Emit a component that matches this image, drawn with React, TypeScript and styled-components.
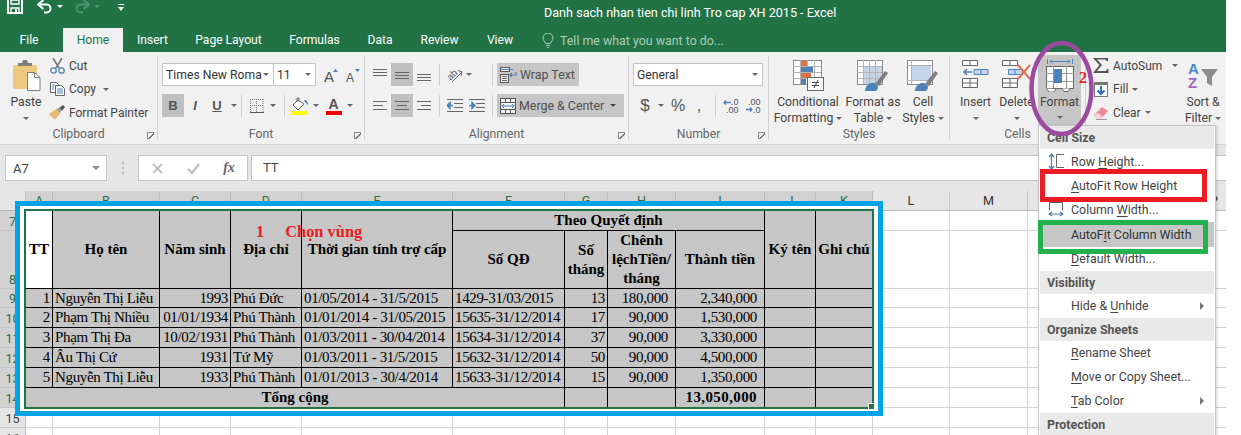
import React from "react";
import styled, { createGlobalStyle } from "styled-components";

const UI = `Roboto, "Open Sans", sans-serif`;
const SERIF = `"Liberation Serif", "Times New Roman", serif`;

const Global = createGlobalStyle`
  html, body { margin: 0; padding: 0; height: 435px; overflow: hidden; background: #fff; }
  svg { display: block; flex: none; }
  * { box-sizing: border-box; }
`;

const Window = styled.div`
  position: relative;
  width: 1226px;
  height: 435px;
  overflow: hidden;
  font-family: ${UI};
  font-size: 12px;
  color: #444;
`;
const Page = styled.div`
  position: relative;
  width: 1241px;
  height: 435px;
  overflow: hidden;
`;
const Spacer = styled.span<{ $w: number }>`
  display: block;
  flex: none;
  width: ${(p) => p.$w}px;
`;

/* ---------- title bar & tabs ---------- */
const TitleBar = styled.div`
  display: flex;
  align-items: flex-start;
  height: 28px;
  background: #217346;
  color: #fff;
`;
const Qat = styled.div`
  display: flex;
  align-items: flex-start;
  width: 544px;
  padding-left: 7px;
`;
const Title = styled.div`
  font-size: 12.6px;
  line-height: 26px;
  white-space: nowrap;
`;
const TabBar = styled.div`
  display: flex;
  align-items: stretch;
  height: 24px;
  padding-left: 5px;
  background: #217346;
`;
const Tab = styled.div<{ $active?: boolean; $w?: number }>`
  display: flex;
  align-items: center;
  justify-content: center;
  width: ${(p) => p.$w}px;
  font-size: 12.1px;
  color: ${(p) => (p.$active ? "#217346" : "#fff")};
  background: ${(p) => (p.$active ? "#f1f1f1" : "transparent")};
`;
const TellMe = styled.div`
  display: flex;
  align-items: center;
  gap: 6px;
  margin-left: 15px;
  font-size: 12.4px;
  color: #a9cdb8;
`;

/* ---------- ribbon ---------- */
const Ribbon = styled.div`
  display: flex;
  height: 93px;
  padding-top: 4px;
  background: #f1f1f1;
  border-bottom: 1px solid #d4d4d4;
`;
const Group = styled.section<{ $w: number; $last?: boolean }>`
  position: relative;
  display: flex;
  flex-direction: column;
  width: ${(p) => p.$w}px;
  height: 84px;
  border-right: ${(p) => (p.$last ? "none" : "1px solid #d0d0d0")};
`;
const GroupBody = styled.div<{ $pl?: number }>`
  display: flex;
  height: 74px;
  padding-left: ${(p) => p.$pl ?? 0}px;
`;
const GroupLabel = styled.div`
  height: 12px;
  line-height: 12px;
  text-align: center;
  color: #666;
  font-size: 12.2px;
`;
const Launcher = styled.span`
  position: absolute;
  right: 3px;
  bottom: 1px;
  width: 7px;
  height: 7px;
  border-left: 1px solid #888;
  border-top: 1px solid #888;
  background: linear-gradient(135deg, transparent 48%, #777 50%, #777 60%, transparent 62%);
`;
const Caret = styled.span<{ $mx?: number; $big?: boolean; $dark?: boolean; $push?: boolean }>`
  display: inline-block;
  flex: none;
  width: 0;
  height: 0;
  margin: 0 ${(p) => p.$mx ?? 0}px;
  margin-left: ${(p) => (p.$push ? "auto" : `${p.$mx ?? 0}px`)};
  border-left: ${(p) => (p.$big ? 4 : 3)}px solid transparent;
  border-right: ${(p) => (p.$big ? 4 : 3)}px solid transparent;
  border-top: ${(p) => (p.$big ? 4 : 3)}px solid ${(p) => (p.$big ? "#888" : p.$dark ? "#444" : "#666")};
`;
const Large = styled.div<{ $w: number; $active?: boolean; $ml?: number; $mt?: number }>`
  display: flex;
  flex-direction: column;
  align-items: center;
  flex: none;
  width: ${(p) => p.$w}px;
  height: 70px;
  margin-left: ${(p) => p.$ml ?? 0}px;
  margin-top: ${(p) => p.$mt ?? 0}px;
  padding-top: 4px;
  background: ${(p) => (p.$active ? "#c6c6c6" : "transparent")};
  white-space: nowrap;
`;
const LargeIcon = styled.div`
  display: flex;
  justify-content: center;
  height: 32px;
`;
const LargeLine = styled.div<{ $mt?: number }>`
  display: flex;
  align-items: center;
  gap: 3px;
  height: 16px;
  margin-top: ${(p) => p.$mt ?? 0}px;
  line-height: 16px;
  font-size: 12.2px;
`;
const Stack = styled.div<{ $w?: number; $pl?: number }>`
  display: flex;
  flex-direction: column;
  flex: none;
  width: ${(p) => (p.$w ? `${p.$w}px` : "auto")};
  margin-top: -2px;
  padding-left: ${(p) => p.$pl ?? 0}px;
`;
const Small = styled.div`
  display: flex;
  align-items: center;
  gap: 4px;
  height: 23.5px;
  white-space: nowrap;
  font-size: 12px;
`;
const IconSlot = styled.div<{ $w?: number }>`
  display: flex;
  align-items: center;
  justify-content: center;
  flex: none;
  width: ${(p) => p.$w ?? 16}px;
`;
const Rows = styled.div<{ $pl: number }>`
  display: flex;
  flex-direction: column;
  gap: 8px;
  padding: 7px 0 0 ${(p) => p.$pl}px;
`;
const Row = styled.div`
  display: flex;
  align-items: center;
  height: 23px;
`;
const Combo = styled.div<{ $w: number; $ml?: number }>`
  display: flex;
  align-items: center;
  justify-content: space-between;
  flex: none;
  width: ${(p) => p.$w}px;
  height: 23px;
  margin-left: ${(p) => p.$ml ?? 0}px;
  padding: 0 4px 0 3px;
  background: #fff;
  border: 1px solid #c6c6c6;
  font-size: 12.2px;
  white-space: nowrap;
`;
const ComboText = styled.span`
  color: #333;
`;
const Tool = styled.div<{ $w: number; $active?: boolean; $ml?: number }>`
  display: flex;
  align-items: center;
  justify-content: center;
  flex: none;
  width: ${(p) => p.$w}px;
  height: 23px;
  margin-left: ${(p) => p.$ml ?? 0}px;
  background: ${(p) => (p.$active ? "#c0c0c0" : "transparent")};
`;
const ToolLetter = styled.span<{ $b?: boolean; $i?: boolean; $u?: boolean }>`
  font-family: "Liberation Sans", sans-serif;
  font-size: 13px;
  font-weight: ${(p) => (p.$b ? 700 : 400)};
  font-style: ${(p) => (p.$i ? "italic" : "normal")};
  text-decoration: ${(p) => (p.$u ? "underline" : "none")};
  color: #555;
`;
const VLine = styled.div<{ $l?: number; $r?: number }>`
  flex: none;
  width: 1px;
  height: 22px;
  margin-left: ${(p) => p.$l ?? 0}px;
  margin-right: ${(p) => p.$r ?? 0}px;
  background: #cfcfcf;
`;
const WideTool = styled.div<{ $w: number }>`
  display: flex;
  align-items: center;
  gap: 3px;
  flex: none;
  width: ${(p) => p.$w}px;
  height: 23px;
  padding: 0 3px;
  background: #c6c6c6;
  font-size: 12.4px;
  color: #505050;
  white-space: nowrap;
`;
const NumSign = styled.span<{ $size: number }>`
  font-family: "Liberation Sans", sans-serif;
  font-size: ${(p) => p.$size}px;
  color: #555;
`;

/* ---------- formula bar ---------- */
const FormulaBar = styled.div`
  display: flex;
  align-items: flex-start;
  height: 46px;
  padding-top: 10px;
  background: #e6e6e6;
`;
const NameBox = styled.div`
  display: flex;
  align-items: center;
  justify-content: space-between;
  width: 102px;
  height: 26px;
  margin-left: 5px;
  padding: 0 6px 0 7px;
  background: #fff;
  border: 1px solid #c6c6c6;
  font-size: 13px;
`;
const Dots = styled.div`
  display: flex;
  flex-direction: column;
  gap: 3px;
  width: 2px;
  margin: 7px 14px 0 15px;
  & > i {
    display: block;
    width: 2px;
    height: 2px;
    background: #b4b4b4;
  }
`;
const FxButtons = styled.div`
  display: flex;
  align-items: center;
  width: 110px;
  height: 26px;
  background: #fff;
  border: 1px solid #c6c6c6;
`;
const FxSlot = styled.div<{ $w: number }>`
  display: flex;
  justify-content: center;
  width: ${(p) => p.$w}px;
`;
const FxLabel = styled.span`
  font-family: ${SERIF};
  font-style: italic;
  font-weight: 700;
  font-size: 14px;
  color: #666;
`;
const FormulaInput = styled.div`
  flex: 1;
  height: 26px;
  margin-left: 3px;
  padding-left: 11px;
  line-height: 24px;
  background: #fff;
  border: 1px solid #c6c6c6;
  border-right: none;
  font-size: 13px;
`;

/* ---------- sheet ---------- */
const Sheet = styled.div`
  position: relative;
  height: 244px;
  overflow: hidden;
`;
const Grid = styled.table`
  table-layout: fixed;
  width: 1244px;
  border-collapse: separate;
  border-spacing: 0;
`;
const Col = styled.col<{ $w: number }>`
  width: ${(p) => p.$w}px;
`;
const Hd = styled.th<{ $sel?: boolean }>`
  padding: 0;
  height: 20px;
  font-weight: 400;
  font-size: 12.6px;
  text-align: center;
  vertical-align: middle;
  color: ${(p) => (p.$sel ? "#2a6e47" : "#333")};
  background: ${(p) => (p.$sel ? "#d2d2d2" : "#e6e6e6")};
  border-right: 1px solid ${(p) => (p.$sel ? "#bdbdbd" : "#c6c6c6")};
  border-bottom: 1px solid #b8b8b8;
`;
const Corner = styled(Hd)`
  background: #e6e6e6;
`;
const RowHd = styled.th<{ $sel?: boolean; $h: number }>`
  padding: 0;
  height: ${(p) => p.$h}px;
  font-weight: 400;
  font-size: 12.6px;
  line-height: 16px;
  text-align: center;
  vertical-align: bottom;
  overflow: hidden;
  color: ${(p) => (p.$sel ? "#2a6e47" : "#444")};
  background: ${(p) => (p.$sel ? "#d2d2d2" : "#e6e6e6")};
  border-right: 1px solid #bdbdbd;
  border-bottom: 1px solid #c6c6c6;
`;
const Blank = styled.td`
  padding: 0;
  border-right: 1px solid #d4d4d4;
  border-bottom: 1px solid #d4d4d4;
`;
const Cell = styled.td<{ $align?: string; $pr?: number; $b?: boolean; $white?: boolean; $lh?: number; $ls?: number }>`
  padding: 0 ${(p) => p.$pr ?? 2}px 0 2px;
  font-family: ${SERIF};
  font-size: 15px;
  letter-spacing: ${(p) => p.$ls ?? (p.$b ? 0 : -0.35)}px;
  line-height: ${(p) => p.$lh ?? 17}px;
  font-weight: ${(p) => (p.$b ? 700 : 400)};
  text-align: ${(p) => p.$align ?? "left"};
  color: #000;
  white-space: nowrap;
  overflow: hidden;
  background: ${(p) => (p.$white ? "#fff" : "#c6c6c6")};
  border-right: 1px solid #000;
  border-bottom: 1px solid #000;
`;
const WrapLine = styled.div`
  white-space: nowrap;
`;

/* ---------- annotations ---------- */
const BlueFrame = styled.div`
  position: absolute;
  left: 15px;
  top: 10px;
  width: 868px;
  height: 215px;
  border: 5px solid #00a2e8;
`;
const WhiteGap = styled.div`
  height: 100%;
  border-style: solid;
  border-color: #fff;
  border-width: 3px 4px 2px 4px;
`;
const GreenFrame = styled.div`
  position: relative;
  height: 100%;
  border: 2px solid #217346;
`;
const Handle = styled.span`
  position: absolute;
  right: -3px;
  bottom: -3px;
  width: 7px;
  height: 7px;
  background: #217346;
  border: 1px solid #fff;
`;
const Note = styled.div`
  position: absolute;
  display: flex;
  gap: 21px;
  left: 256px;
  top: 32px;
  font-family: ${SERIF};
  font-weight: 700;
  font-size: 16.4px;
  line-height: 18px;
  color: #ed1c24;
  white-space: nowrap;
`;
const Two = styled.span`
  position: absolute;
  left: 1079px;
  top: 69px;
  font-family: ${SERIF};
  font-weight: 700;
  font-size: 16px;
  line-height: 18px;
  color: #ed1c24;
`;
const Ring = styled.svg`
  position: absolute;
  left: 1028px;
  top: 40px;
`;

/* ---------- menu ---------- */
const Menu = styled.div`
  position: absolute;
  left: 1038px;
  top: 125px;
  width: 178px;
  height: 320px;
  padding: 0 1px;
  background: #fff;
  border: 1px solid #c6c6c6;
  box-shadow: 1px 1px 3px rgba(0, 0, 0, 0.18);
  font-size: 12.4px;
`;
const MenuHead = styled.div`
  height: 23px;
  padding-left: 7px;
  line-height: 23px;
  background: #e9e9e9;
  font-weight: 700;
  color: #555;
`;
const MenuItem = styled.div<{ $h?: number; $hover?: boolean }>`
  display: flex;
  align-items: center;
  height: ${(p) => p.$h ?? 24}px;
  background: ${(p) => (p.$hover ? "#c6c6c6" : "transparent")};
  color: ${(p) => (p.$hover ? "#333" : "#444")};
  white-space: nowrap;
  & u {
    text-underline-offset: 2px;
  }
`;
const MenuIcon = styled.div`
  display: flex;
  justify-content: center;
  flex: none;
  width: 31px;
`;
const SubArrow = styled.span`
  margin-left: auto;
  margin-right: 10px;
  width: 0;
  height: 0;
  border-top: 4px solid transparent;
  border-bottom: 4px solid transparent;
  border-left: 4px solid #777;
`;
const Mark = styled.div<{ $c: string; $l: number; $t: number; $w: number; $h: number }>`
  position: absolute;
  left: ${(p) => p.$l}px;
  top: ${(p) => p.$t}px;
  width: ${(p) => p.$w}px;
  height: ${(p) => p.$h}px;
  border: 5px solid ${(p) => p.$c};
`;

/* ---------- icons ---------- */
const B = "#4d82b8";
const O = "#e0714b";

const Save = () => (
  <svg width="16" height="14" viewBox="0 0 16 14">
    <path d="M1 0v13h14V0" fill="none" stroke="#fff" strokeWidth="2" />
    <path d="M4 0h8v4H4zM4 8h8v5H4z" fill="none" stroke="#fff" strokeWidth="1.4" />
    <rect x="8" y="9" width="2" height="3" fill="#fff" />
  </svg>
);
const UndoSvg = styled.svg<{ $flip?: boolean }>`
  transform: ${(p) => (p.$flip ? "scaleX(-1)" : "none")};
`;
const Undo = ({ dim }: { dim?: boolean }) => (
  <UndoSvg $flip={dim} width="16" height="14" viewBox="0 0 16 14">
    <path d="M2 4.500h7.500a4 4 0 0 1 0 8H7" fill="none" stroke={dim ? "#4f9470" : "#fff"} strokeWidth="2" />
    <path d="M6.500 0 1 4.500 6.500 9" fill="none" stroke={dim ? "#4f9470" : "#fff"} strokeWidth="2" />
  </UndoSvg>
);
const WhiteCaret = styled(Caret)<{ $dim?: boolean; $ml: number }>`
  margin: 5px 0 0 ${(p) => p.$ml}px;
  border-top-color: ${(p) => (p.$dim ? "#4f9470" : "#fff")};
`;
const QatCustom = styled.svg`
  margin: 4px 0 0 18px;
`;
const Bulb = () => (
  <svg width="12" height="15" viewBox="0 0 12 15">
    <path d="M3.500 10.500C3 8 1 7.500 1 5a5 5 0 0 1 10 0c0 2.500-2 3-2.500 5.500z" fill="none" stroke="#a9cdb8" />
    <path d="M4 12.500h4M5 14.500h2" stroke="#a9cdb8" />
  </svg>
);
const Paste = () => (
  <svg width="30" height="31" viewBox="0 0 30 31">
    <rect x="2" y="5" width="24" height="24" rx="2" fill="#edc87e" />
    <path d="M7 6V3h4l1-3h4l1 3h4v3z" fill="#7d7d7d" />
    <path d="M16.500 12.500h7l5.500 5v13H16.500z" fill="#fff" stroke="#7d7d7d" />
    <path d="M23.500 12.500v5h5.500" fill="none" stroke="#7d7d7d" />
  </svg>
);
const Cut = () => (
  <svg width="15" height="16" viewBox="0 0 15 16">
    <path d="M3 0l6 10M12 0 6 10" stroke="#777" strokeWidth="1.6" />
    <circle cx="3.500" cy="12.500" r="2.700" fill="none" stroke={B} strokeWidth="1.300" />
    <circle cx="11.500" cy="12.500" r="2.700" fill="none" stroke={B} strokeWidth="1.300" />
  </svg>
);
const Copy = () => (
  <svg width="15" height="14" viewBox="0 0 15 14">
    <path d="M.5.500h6l2 2v8H.5z" fill="#fff" stroke="#666" />
    <path d="M5.500 3.500h6l3 3v7h-9z" fill="#fff" stroke="#666" />
    <path d="M7 7h6M7 9h6M7 11h6M2 3h3M2 5h2M2 7h2" stroke={B} />
  </svg>
);
const Painter = () => (
  <svg width="16" height="15" viewBox="0 0 16 15">
    <path d="M0 9 7 4l4 5-5 5.500C4 13 1 11 0 9z" fill="#e8bb70" />
    <path d="M7 4l3-1 2 3-1 2.500z" fill="#999" />
    <path d="M10 3l4-3 2 2-3 4z" fill="#555" />
  </svg>
);
const Grow = ({ up, size }: { up: boolean; size: number }) => (
  <svg width="17" height="20" viewBox="0 0 17 20">
    <text x="1" y="17" fontFamily="Liberation Sans" fontSize={size} fill="#555">A</text>
    <path d={up ? "M10 7l2.500-3L15 7z" : "M10 4h5l-2.500 3z"} fill={B} />
  </svg>
);
const Borders = () => (
  <svg width="14" height="14" viewBox="0 0 14 14">
    <path d="M.5 0v13M6.500 0v13M13 0v13M0 .5h13M0 6.500h13" stroke="#777" strokeDasharray="1 1" fill="none" />
    <path d="M0 13.500h14" stroke="#555" />
  </svg>
);
const Fill = () => (
  <svg width="17" height="18" viewBox="0 0 17 18">
    <path d="M6 3 1 8l5 5 6-6z" fill="#fff" stroke="#666" />
    <path d="M5 5V1h2v3" fill="none" stroke="#666" />
    <path d="M12 3c3 0 4 2 4 5-1 0-1-2-3-3z" fill={B} />
    <rect x="0" y="14" width="16" height="4" fill="#ffff00" />
  </svg>
);
const FontColor = () => (
  <svg width="16" height="20" viewBox="0 0 16 20">
    <text x="2.500" y="13" fontFamily="Liberation Sans" fontWeight="700" fontSize="14" fill="#555">A</text>
    <rect x="0" y="15" width="16" height="4" fill="#f00000" />
  </svg>
);
const Lines = ({ ys, xs }: { ys: number[]; xs: [number, number][] }) => (
  <svg width="14" height="14" viewBox="0 0 14 14">
    {ys.map((y, i) => (
      <path key={y} d={`M${xs[i][0]} ${y + 0.5}H${xs[i][1]}`} stroke="#666" />
    ))}
  </svg>
);
const full: [number, number][] = [[0, 14], [0, 14], [0, 14]];
const Orient = () => (
  <svg width="20" height="20" viewBox="0 0 20 20">
    <text x="3" y="13" transform="rotate(-45 8 10)" fontFamily="Liberation Sans" fontSize="9.500" fill="#555">ab</text>
    <path d="M8 17 18 7M14 5.500 18 7l-1 4" fill="none" stroke="#666" />
  </svg>
);
const Indent = ({ right }: { right?: boolean }) => (
  <svg width="16" height="13" viewBox="0 0 16 13">
    <path d="M0 .5h16M7 4.500h9M7 8.500h9M0 12.500h16" stroke="#666" />
    <path d={right ? "M0 6.500h4M3 3.500l3 3-3 3z" : "M6 6.500H2M3 3.500l-3 3 3 3z"} stroke={B} strokeWidth="1.500" fill={B} />
  </svg>
);
const Wrap = () => (
  <svg width="17" height="16" viewBox="0 0 17 16">
    <rect x=".5" y=".5" width="9" height="4" fill="#f1f1f1" stroke="#555" />
    <path d="M1 2.500h12" stroke={B} />
    <rect x=".5" y="7.500" width="8" height="8" fill="#f1f1f1" stroke="#555" />
    <path d="M2 9.500h5M2 11.500h5M2 13.500h5" stroke="#666" />
    <path d="M16 5v3h-6M12 6l-2 2 2 2" fill="none" stroke={B} strokeWidth="1.200" />
  </svg>
);
const Merge = () => (
  <svg width="16" height="16" viewBox="0 0 16 16">
    <rect x=".5" y=".5" width="15" height="15" fill="#f1f1f1" stroke="#555" />
    <path d="M0 4.500h16M0 11.500h16M5.500 0v4M10.500 0v4M5.500 12v4M10.500 12v4" stroke="#555" />
    <path d="M2 8h12M4 6 2 8l2 2M12 6l2 2-2 2" fill="none" stroke={B} />
  </svg>
);
const Dec = ({ flip }: { flip?: boolean }) => (
  <svg width="16" height="16" viewBox="0 0 16 16">
    {flip ? (
      <>
        <text x="3" y="7" fontFamily="Liberation Sans" fontSize="9" fill="#555">.00</text>
        <text x="8" y="15" fontFamily="Liberation Sans" fontSize="9" fill="#555">.0</text>
        <path d="M1 11.500h6M5 9.500l2 2-2 2" fill="none" stroke={B} strokeWidth="1.300" />
      </>
    ) : (
      <>
        <text x="8" y="7" fontFamily="Liberation Sans" fontSize="9" fill="#555">.0</text>
        <text x="3" y="15" fontFamily="Liberation Sans" fontSize="9" fill="#555">.00</text>
        <path d="M8 4.500H1M3 2.500l-2 2 2 2" fill="none" stroke={B} strokeWidth="1.300" />
      </>
    )}
  </svg>
);
const TableGrid = ({ w, h, cols, rows }: { w: number; h: number; cols: number[]; rows: number[] }) => (
  <>
    <rect x=".5" y=".5" width={w} height={h} fill="#fff" stroke="#8a8a8a" />
    {cols.map((x) => (
      <path key={`c${x}`} d={`M${x + 0.5} 0v${h}`} stroke="#b4b4b4" />
    ))}
    {rows.map((y) => (
      <path key={`r${y}`} d={`M0 ${y + 0.5}h${w}`} stroke="#b4b4b4" />
    ))}
  </>
);
const CondFmt = () => (
  <svg width="31" height="31" viewBox="0 0 31 31">
    <TableGrid w={28} h={24} cols={[7, 14, 21]} rows={[6, 12, 18]} />
    <rect x="8" y="1" width="6" height="5" fill={O} />
    <rect x="8" y="7" width="12" height="5" fill={B} />
    <rect x="8" y="13" width="10" height="5" fill={O} />
    <rect x="8" y="19" width="5" height="5" fill={B} />
    <rect x="14.500" y="17.500" width="16" height="13" fill="#fff" stroke="#666" />
    <path d="M19 22.500h7M19 25.500h7M25 20l-4 8" stroke="#444" fill="none" />
  </svg>
);
const Brush = () => (
  <>
    <path d="M18 24 28 11l3 2-9 13z" fill="#7f7f7f" />
    <path d="M8 31c0-5 5-9 9-8l4 3c0 3-1 5-3 5z" fill={B} />
  </>
);
const FmtTable = () => (
  <svg width="32" height="31" viewBox="0 0 32 31">
    <TableGrid w={25} h={24} cols={[6, 12, 18]} rows={[6, 12, 18]} />
    <rect x="7" y="7" width="18" height="17" fill="#c5d5e6" />
    <path d="M7 12.500h18M7 18.500h18M12.500 7v17M18.500 7v17" stroke="#b4b4b4" />
    <Brush />
  </svg>
);
const CellStyle = () => (
  <svg width="32" height="31" viewBox="0 0 32 31">
    <TableGrid w={25} h={24} cols={[4]} rows={[5, 20]} />
    <rect x="5" y="6" width="19" height="14" fill="#c2d5ea" />
    <Brush />
  </svg>
);
const InsertIco = () => (
  <svg width="27" height="28" viewBox="0 0 27 28">
    <path d="M.5.500h15v5H.5zM8 0v5M.5 18.500h15v9H.5zM8 18v9M0 23h15" fill="#fff" stroke="#666" />
    <path d="M12 9.500h14v5H12zM19 9v5" fill="#c2d5ea" stroke={B} />
    <path d="M10 12H2M5 9l-3 3 3 3" fill="none" stroke={B} strokeWidth="1.500" />
  </svg>
);
const DeleteIco = () => (
  <svg width="30" height="28" viewBox="0 0 30 28">
    <path d="M.5.500h15v5H.5zM8 0v5M.5 18.500h15v9H.5zM8 18v9M0 23h15" fill="#fff" stroke="#666" />
    <path d="M6.500 9.500h14v5h-14zM13 9v5" fill="#c2d5ea" stroke={B} />
    <path d="M16 5l12 14M28 5 16 19" stroke={O} strokeWidth="2" />
  </svg>
);
const FormatIco = () => (
  <svg width="28" height="33" viewBox="0 0 28 33">
    <path d="M1.500 0v5M26.500 0v5M4 2.500h20M6 .5 4 2.500l2 2M22 .5l2 2-2 2" fill="none" stroke={B} />
    <rect x=".5" y="7.500" width="27" height="22" fill="#fff" stroke="#666" />
    <path d="M7.500 7v22M20.500 7v22M0 14.500h28M0 22.500h28" stroke="#999" />
    <rect x="8" y="10" width="8" height="14" fill={B} />
    <path d="M.5 29.500 3 33h5l2-3M16 29.500l2 3h4l2-3" fill="#fff" stroke="#666" />
  </svg>
);
const Sigma = () => (
  <svg width="16" height="15" viewBox="0 0 16 15">
    <path d="M0 0h15v3h-1.500l-1-1.500H4L9 7l-5 6h9l1-2h1.500v4H0l6.500-8z" fill="#555" />
  </svg>
);
const FillIco = () => (
  <svg width="14" height="15" viewBox="0 0 14 15">
    <rect x=".5" y=".5" width="13" height="14" fill="#fff" stroke="#777" />
    <rect x="0" y="0" width="14" height="3" fill="#777" />
    <path d="M7 4v8M3.500 8.500 7 12l3.500-3.500" fill="none" stroke="#2f6fb0" strokeWidth="2" />
  </svg>
);
const Eraser = () => (
  <svg width="15" height="14" viewBox="0 0 15 14">
    <path d="M0 9 8 1l6 4-7 8H3z" fill="#e98a99" />
    <path d="M0 9l3 4h4l2-2-5-4z" fill="#f5d4d9" />
    <path d="M2 13.500h11" stroke="#999" />
  </svg>
);
const SortIco = () => (
  <svg width="32" height="31" viewBox="0 0 32 31">
    <text x="1" y="14" fontFamily="Liberation Sans" fontWeight="700" fontSize="15" fill="#4a86c5">A</text>
    <text x="1" y="28" fontFamily="Liberation Sans" fontWeight="700" fontSize="15" fill="#9a6bc0">Z</text>
    <path d="M14 9h17l-6 8v9l-5-3v-6z" fill="#8c8c8c" />
  </svg>
);
const RowHeightIco = () => (
  <svg width="16" height="17" viewBox="0 0 16 17">
    <path d="M3.500 2v13M1 4l2.500-3L6 4M1 13l2.500 3L6 13" fill="none" stroke={B} strokeWidth="1.300" />
    <path d="M16 1.500H8.500v13H16" fill="none" stroke="#666" />
  </svg>
);
const ColWidthIco = () => (
  <svg width="16" height="15" viewBox="0 0 16 15">
    <path d="M1.500 8V.5h13V8" fill="none" stroke="#666" />
    <path d="M2 12h12M4 10l-3 2 3 2M12 10l3 2-3 2" fill="none" stroke={B} strokeWidth="1.200" />
  </svg>
);
const X = () => (
  <svg width="11" height="11" viewBox="0 0 11 11">
    <path d="M1 1l9 9M10 1l-9 9" stroke="#bdbdbd" strokeWidth="1.800" />
  </svg>
);
const Check = () => (
  <svg width="13" height="11" viewBox="0 0 13 11">
    <path d="M1 6l4 4 7-9" fill="none" stroke="#bdbdbd" strokeWidth="2.200" />
  </svg>
);

/* ---------- data ---------- */
const COLS = [26, 27, 107, 71, 71, 151, 112, 43, 68, 89, 51, 57, 77, 78, 78, 78, 61];
const LETTERS = ["A", "B", "C", "D", "E", "F", "G", "H", "I", "J", "K", "L", "M", "N", "O", "P"];
const ROWS = [
  ["1", "Nguyễn Thị Liễu", "1993", "Phú Đức", "01/05/2014 - 31/5/2015", "1429-31/03/2015", "13", "180,000", "2,340,000"],
  ["2", "Phạm Thị Nhiều", "01/01/1934", "Phú Thành", "01/01/2014 - 31/05/2015", "15635-31/12/2014", "17", "90,000", "1,530,000"],
  ["3", "Phạm Thị Đa", "10/02/1931", "Phú Thành", "01/03/2011 - 30/04/2014", "15634-31/12/2014", "37", "90,000", "3,330,000"],
  ["4", "Âu Thị Cứ", "1931", "Tứ Mỹ", "01/03/2011 - 31/5/2015", "15632-31/12/2014", "50", "90,000", "4,500,000"],
  ["5", "Nguyễn Thị Liễu", "1933", "Phú Thành", "01/01/2013 - 30/4/2014", "15633-31/12/2014", "15", "90,000", "1,350,000"],
];
const ROW_H = [19, 20, 20, 20, 20];
const Blanks = () => (
  <>
    <Blank />
    <Blank />
    <Blank />
    <Blank />
    <Blank />
  </>
);

export default function App() {
  return (
    <Page>
      <Global />
      <Window>
        <TitleBar>
          <Qat>
            <Save />
            <Spacer $w={14} />
            <Undo />
            <WhiteCaret $ml={4} />
            <Spacer $w={11} />
            <Undo dim />
            <WhiteCaret $ml={4} $dim />
            <QatCustom width="6" height="8" viewBox="0 0 6 8">
              <path d="M0 .5h6" stroke="#fff" />
              <path d="M0 3h6L3 7z" fill="#fff" />
            </QatCustom>
          </Qat>
          <Title>Danh sach nhan tien chi linh Tro cap XH 2015 - Excel</Title>
        </TitleBar>
        <TabBar>
          <Tab $w={48}>File</Tab>
          <Tab $w={10} />
          <Tab $w={60} $active>Home</Tab>
          <Tab $w={59}>Insert</Tab>
          <Tab $w={93}>Page Layout</Tab>
          <Tab $w={79}>Formulas</Tab>
          <Tab $w={52}>Data</Tab>
          <Tab $w={67}>Review</Tab>
          <Tab $w={54}>View</Tab>
          <TellMe>
            <Bulb />
            Tell me what you want to do...
          </TellMe>
        </TabBar>

        <Ribbon>
          <Group $w={158}>
            <GroupBody $pl={10}>
              <Large $w={32}>
                <LargeIcon><Paste /></LargeIcon>
                <LargeLine $mt={2}>Paste</LargeLine>
                <LargeLine><Caret /></LargeLine>
              </Large>
              <Stack $pl={7}>
                <Small><IconSlot><Cut /></IconSlot>Cut</Small>
                <Small><IconSlot><Copy /></IconSlot>Copy<Caret $mx={3} /></Small>
                <Small><IconSlot><Painter /></IconSlot>Format Painter</Small>
              </Stack>
            </GroupBody>
            <GroupLabel>Clipboard</GroupLabel>
            <Launcher />
          </Group>

          <Group $w={207}>
            <GroupBody>
              <Rows $pl={4}>
                <Row>
                  <Combo $w={112}>
                    <ComboText>Times New Roma</ComboText>
                    <Caret />
                  </Combo>
                  <Combo $w={43} $ml={-1}>
                    <ComboText>11</ComboText>
                    <Caret />
                  </Combo>
                  <Tool $w={22} $ml={4}><Grow up size={15} /></Tool>
                  <Tool $w={22}><Grow up={false} size={12} /></Tool>
                </Row>
                <Row>
                  <Tool $w={22} $active><ToolLetter $b>B</ToolLetter></Tool>
                  <Tool $w={22}><ToolLetter $i $b>I</ToolLetter></Tool>
                  <Tool $w={22}><ToolLetter $u $b>U</ToolLetter></Tool>
                  <Caret $mx={3} />
                  <VLine $l={1} $r={8} />
                  <Borders />
                  <Caret $mx={6} />
                  <VLine $l={2} $r={7} />
                  <Fill />
                  <Caret $mx={4} />
                  <Spacer $w={3} />
                  <FontColor />
                  <Caret $mx={5} />
                </Row>
              </Rows>
            </GroupBody>
            <GroupLabel>Font</GroupLabel>
            <Launcher />
          </Group>

          <Group $w={264}>
            <GroupBody>
              <Rows $pl={4}>
                <Row>
                  <Tool $w={22}><Lines ys={[1, 4, 7]} xs={full} /></Tool>
                  <Tool $w={22} $active><Lines ys={[4, 7, 10]} xs={full} /></Tool>
                  <Tool $w={22}><Lines ys={[6, 9, 12]} xs={full} /></Tool>
                  <VLine $l={4} $r={2} />
                  <Tool $w={24}><Orient /></Tool>
                  <Caret />
                  <Spacer $w={20} />
                  <VLine $r={4} />
                  <WideTool $w={82}><Wrap />Wrap Text</WideTool>
                </Row>
                <Row>
                  <Tool $w={22}><Lines ys={[2, 6, 10]} xs={[[0, 14], [0, 10], [0, 14]]} /></Tool>
                  <Tool $w={22} $active><Lines ys={[2, 6, 10]} xs={[[0, 14], [2, 12], [0, 14]]} /></Tool>
                  <Tool $w={22}><Lines ys={[2, 6, 10]} xs={[[0, 14], [4, 14], [0, 14]]} /></Tool>
                  <VLine $l={4} $r={4} />
                  <Tool $w={22}><Indent /></Tool>
                  <Tool $w={22}><Indent right /></Tool>
                  <Spacer $w={4} />
                  <VLine $r={4} />
                  <WideTool $w={127}>
                    <Merge />Merge &amp; Center
                    <Caret $push $dark $mx={5} />
                  </WideTool>
                </Row>
              </Rows>
            </GroupBody>
            <GroupLabel>Alignment</GroupLabel>
            <Launcher />
          </Group>

          <Group $w={140}>
            <GroupBody>
              <Rows $pl={4}>
                <Row>
                  <Combo $w={130}>
                    <ComboText>General</ComboText>
                    <Caret />
                  </Combo>
                </Row>
                <Row>
                  <Tool $w={22} $ml={1}><NumSign $size={17}>$</NumSign></Tool>
                  <Caret $mx={2} />
                  <Tool $w={24}><NumSign $size={16}>%</NumSign></Tool>
                  <Tool $w={18}><NumSign $size={16}>,</NumSign></Tool>
                  <VLine $l={7} $r={7} />
                  <Tool $w={16}><Dec /></Tool>
                  <Tool $w={16} $ml={6}><Dec flip /></Tool>
                </Row>
              </Rows>
            </GroupBody>
            <GroupLabel>Number</GroupLabel>
            <Launcher />
          </Group>

          <Group $w={181}>
            <GroupBody $pl={6}>
              <Large $w={66}>
                <LargeIcon><CondFmt /></LargeIcon>
                <LargeLine $mt={2}>Conditional</LargeLine>
                <LargeLine>Formatting<Caret /></LargeLine>
              </Large>
              <Large $w={64}>
                <LargeIcon><FmtTable /></LargeIcon>
                <LargeLine $mt={2}>Format as</LargeLine>
                <LargeLine>Table<Caret /></LargeLine>
              </Large>
              <Large $w={36}>
                <LargeIcon><CellStyle /></LargeIcon>
                <LargeLine $mt={2}>Cell</LargeLine>
                <LargeLine>Styles<Caret /></LargeLine>
              </Large>
            </GroupBody>
            <GroupLabel>Styles</GroupLabel>
          </Group>

          <Group $w={136}>
            <GroupBody $pl={5}>
              <Large $w={41}>
                <LargeIcon><InsertIco /></LargeIcon>
                <LargeLine $mt={2}>Insert</LargeLine>
                <LargeLine><Caret /></LargeLine>
              </Large>
              <Large $w={41}>
                <LargeIcon><DeleteIco /></LargeIcon>
                <LargeLine $mt={2}>Delete</LargeLine>
                <LargeLine><Caret /></LargeLine>
              </Large>
              <Large $w={43} $active $ml={1} $mt={-1}>
                <LargeIcon><FormatIco /></LargeIcon>
                <LargeLine $mt={3}>Format</LargeLine>
                <LargeLine><Caret /></LargeLine>
              </Large>
            </GroupBody>
            <GroupLabel>Cells</GroupLabel>
          </Group>

          <Group $w={140} $last>
            <GroupBody $pl={7}>
              <Stack $w={93}>
                <Small><IconSlot><Sigma /></IconSlot>AutoSum<Caret $mx={6} /></Small>
                <Small><IconSlot><FillIco /></IconSlot>Fill<Caret /></Small>
                <Small><IconSlot><Eraser /></IconSlot>Clear<Caret /></Small>
              </Stack>
              <Large $w={36} $ml={-1}>
                <LargeIcon><SortIco /></LargeIcon>
                <LargeLine $mt={2}>Sort &amp;</LargeLine>
                <LargeLine>Filter<Caret /></LargeLine>
              </Large>
            </GroupBody>
          </Group>
        </Ribbon>

        <FormulaBar>
          <NameBox>A7<Caret $big /></NameBox>
          <Dots><i /><i /><i /></Dots>
          <FxButtons>
            <FxSlot $w={36}><X /></FxSlot>
            <FxSlot $w={36}><Check /></FxSlot>
            <FxSlot $w={36}><FxLabel>fx</FxLabel></FxSlot>
          </FxButtons>
          <FormulaInput>TT</FormulaInput>
        </FormulaBar>

        <Sheet>
          <Grid>
            <colgroup>
              {COLS.map((w, i) => (
                <Col key={i} $w={w} />
              ))}
            </colgroup>
            <thead>
              <tr>
                <Corner />
                {LETTERS.map((l, i) => (
                  <Hd key={l} $sel={i < 11}>{l}</Hd>
                ))}
              </tr>
            </thead>
            <tbody>
              <tr>
                <RowHd $h={20} $sel>7</RowHd>
                <Cell rowSpan={2} $white $b $align="center">TT</Cell>
                <Cell rowSpan={2} $b $align="center">Họ tên</Cell>
                <Cell rowSpan={2} $b $align="center">Năm sinh</Cell>
                <Cell rowSpan={2} $b $align="center">Địa chỉ</Cell>
                <Cell rowSpan={2} $b $align="center" $ls={-0.15}>Thời gian tính trợ cấp</Cell>
                <Cell colSpan={4} $b $align="center">Theo Quyết định</Cell>
                <Cell rowSpan={2} $b $align="center">Ký tên</Cell>
                <Cell rowSpan={2} $b $align="center">Ghi chú</Cell>
                <Blanks />
              </tr>
              <tr>
                <RowHd $h={58} $sel>8</RowHd>
                <Cell $b $align="center">Số QĐ</Cell>
                <Cell $b $align="center" $lh={19}>
                  <WrapLine>Số</WrapLine>
                  <WrapLine>tháng</WrapLine>
                </Cell>
                <Cell $b $align="center" $lh={19}>
                  <WrapLine>Chênh</WrapLine>
                  <WrapLine>lệchTiền/</WrapLine>
                  <WrapLine>tháng</WrapLine>
                </Cell>
                <Cell $b $align="center">Thành tiền</Cell>
                <Blanks />
              </tr>
              {ROWS.map((r, i) => (
                <tr key={r[0]}>
                  <RowHd $h={ROW_H[i]} $sel>{9 + i}</RowHd>
                  <Cell $align="right">{r[0]}</Cell>
                  <Cell>{r[1]}</Cell>
                  <Cell $align="right">{r[2]}</Cell>
                  <Cell>{r[3]}</Cell>
                  <Cell>{r[4]}</Cell>
                  <Cell>{r[5]}</Cell>
                  <Cell $align="right">{r[6]}</Cell>
                  <Cell $align="right" $pr={7}>{r[7]}</Cell>
                  <Cell $align="right" $pr={7}>{r[8]}</Cell>
                  <Cell />
                  <Cell />
                  <Blanks />
                </tr>
              ))}
              <tr>
                <RowHd $h={20} $sel>14</RowHd>
                <Cell colSpan={6} $b $align="center">Tổng cộng</Cell>
                <Cell />
                <Cell />
                <Cell $b $align="right" $pr={7} $ls={0.4}>13,050,000</Cell>
                <Cell />
                <Cell />
                <Blanks />
              </tr>
              {[15, 16].map((n) => (
                <tr key={n}>
                  <RowHd $h={20}>{n}</RowHd>
                  {Array.from({ length: 16 }, (_, i) => (
                    <Blank key={i} />
                  ))}
                </tr>
              ))}
            </tbody>
          </Grid>
          <BlueFrame>
            <WhiteGap>
              <GreenFrame>
                <Handle />
              </GreenFrame>
            </WhiteGap>
          </BlueFrame>
          <Note>
            <span>1</span>
            <span>Chọn vùng</span>
          </Note>
        </Sheet>

        <Menu>
          <MenuHead>Cell Size</MenuHead>
          <MenuItem $h={24.4}><MenuIcon><RowHeightIco /></MenuIcon><span>Row <u>H</u>eight...</span></MenuItem>
          <MenuItem $h={24.4}><MenuIcon /><span><u>A</u>utoFit Row Height</span></MenuItem>
          <MenuItem $h={24.4}><MenuIcon><ColWidthIco /></MenuIcon><span>Column <u>W</u>idth...</span></MenuItem>
          <MenuItem $h={24.4} $hover><MenuIcon /><span>AutoF<u>i</u>t Column Width</span></MenuItem>
          <MenuItem $h={24.4}><MenuIcon /><span><u>D</u>efault Width...</span></MenuItem>
          <MenuHead>Visibility</MenuHead>
          <MenuItem><MenuIcon /><span>Hide &amp; <u>U</u>nhide</span><SubArrow /></MenuItem>
          <MenuHead>Organize Sheets</MenuHead>
          <MenuItem><MenuIcon /><span><u>R</u>ename Sheet</span></MenuItem>
          <MenuItem><MenuIcon /><span><u>M</u>ove or Copy Sheet...</span></MenuItem>
          <MenuItem><MenuIcon /><span><u>T</u>ab Color</span><SubArrow /></MenuItem>
          <MenuHead>Protection</MenuHead>
        </Menu>
        <Mark $c="#ed1c24" $l={1040} $t={169} $w={167} $h={33} />
        <Mark $c="#22b14c" $l={1038} $t={220} $w={170} $h={34} />
        <Ring width="67" height="97" viewBox="0 0 67 97">
          <ellipse cx="33.500" cy="48.500" rx="30" ry="45.500" fill="none" stroke="#9b4aa0" strokeWidth="4.500" />
        </Ring>
        <Two>2</Two>
      </Window>
    </Page>
  );
}
